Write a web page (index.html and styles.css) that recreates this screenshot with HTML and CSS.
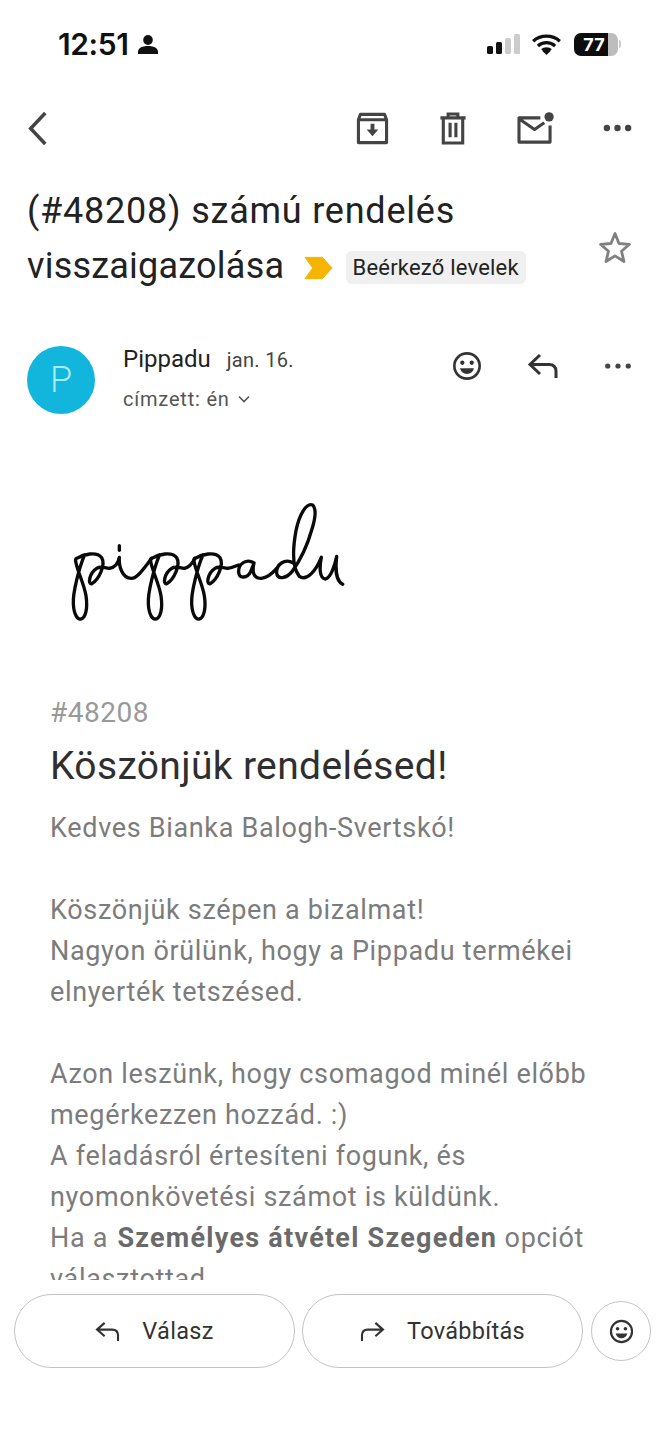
FILE: index.html
```html
<!DOCTYPE html>
<html lang="hu">
<head>
<meta charset="utf-8">
<title>Gmail</title>
<link rel="stylesheet" href="styles.css">
</head>
<body>
<div class="screen">
  <header class="status">
    <div class="status-left">
      <span class="time">12:51</span>
      <svg class="person" viewBox="0 0 20 19"><ellipse cx="10" cy="5" rx="4.800" ry="5"/><path d="M0 19v-2c0-4 4-6 10-6s10 2 10 6v2z"/></svg>
    </div>
    <div class="status-right">
      <svg class="signal" viewBox="0 0 33 20"><rect x="0" y="12" width="6" height="8" rx="1.500" fill="#111"/><rect x="9" y="8" width="6" height="12" rx="1.500" fill="#111"/><rect x="18" y="4" width="6" height="16" rx="1.500" fill="#ccc"/><rect x="27" y="0" width="6" height="20" rx="1.500" fill="#ccc"/></svg>
      <svg class="wifi" viewBox="0 0 30 22"><path d="M1 7.500C9 .5 21 .5 29 7.500M6 12.500c5-4.500 13-4.500 18 0M10.500 17c2.500-2 6.500-2 9 0" fill="none" stroke="#111" stroke-width="3.400"/><path d="M15 22l-4-4c2-2 6-2 8 0z" fill="#111"/></svg>
      <div class="battery"><span class="battery-fill">77</span><span class="battery-rest"></span></div>
      <span class="battery-tip"></span>
    </div>
  </header>

  <nav class="toolbar">
    <svg class="back" viewBox="0 0 20 36"><path d="M18 2L3 18l15 16" fill="none" stroke="#444" stroke-width="3.600"/></svg>
    <div class="tools">
      <svg class="ic" viewBox="0 0 34 34"><path d="M2.500 8l2-5.500h25l2 5.500v23.500h-29zM2.500 8h29" fill="none" stroke="#444" stroke-width="3.200" stroke-linejoin="round"/><path d="M15 12h4v6h4l-6 7-6-7h4z" fill="#444"/></svg>
      <svg class="ic ic-trash" viewBox="0 0 28 34"><path d="M1 6h26M9 5V2h10v3M4 6v26h20V6M11 11v15M17 11v15" fill="none" stroke="#444" stroke-width="3.200"/></svg>
      <svg class="ic ic-mail" viewBox="0 0 38 34"><path d="M24 6H2v25h32V14M2 7l16 11 10-7" fill="none" stroke="#444" stroke-width="3.200" stroke-linejoin="round"/><circle cx="33" cy="5" r="4.800" fill="#444"/></svg>
      <svg class="ic ic-more" viewBox="0 0 30 8"><circle cx="4" cy="4" r="3.300"/><circle cx="15" cy="4" r="3.300"/><circle cx="26" cy="4" r="3.300"/></svg>
    </div>
  </nav>

  <section class="subject">
    <h1 class="subject-text"><span class="subject-first">(#48208) számú rendelés</span><br>visszaigazolása
      <svg class="marker" viewBox="0 0 30 24"><path d="M1 1h18l10 11-10 11H1l8-11z" fill="#f4b400" stroke="#f4b400" stroke-linejoin="round"/></svg>
      <span class="label">Beérkező levelek</span>
    </h1>
    <svg class="star" viewBox="0 0 34 34"><path d="M17 3.500l4 10 10.500.8-8 6.900 2.500 10.300-9-5.600-9 5.600 2.500-10.300-8-6.900 10.500-.8z" fill="none" stroke="#808080" stroke-width="2.800" stroke-linejoin="round"/></svg>
  </section>

  <section class="sender">
    <div class="avatar">P</div>
    <div class="sender-info">
      <div class="sender-top"><span class="sender-name">Pippadu</span><span class="sender-date">jan. 16.</span></div>
      <div class="sender-to">címzett: én
        <svg class="chev" viewBox="0 0 12 8"><path d="M1 1.500l5 5 5-5" fill="none" stroke="#555" stroke-width="1.600"/></svg>
      </div>
    </div>
    <div class="sender-actions">
      <svg class="act act-smile" viewBox="0 0 32 32"><circle cx="16" cy="16" r="13.500" fill="none" stroke="#333" stroke-width="2.800"/><circle cx="11" cy="12.500" r="2.300" fill="#333"/><circle cx="21" cy="12.500" r="2.300" fill="#333"/><path d="M8.500 18.500h15c-1 4-4 6-7.500 6s-6.500-2-7.500-6z" fill="#333"/></svg>
      <svg class="act act-reply" viewBox="0 0 32 26"><path d="M13 2L3 11.500 13 21M3 11.500h19c5 0 7 3 7 7V25" fill="none" stroke="#333" stroke-width="3"/></svg>
      <svg class="act act-more" viewBox="0 0 30 8"><circle cx="4" cy="4" r="2.800"/><circle cx="15" cy="4" r="2.800"/><circle cx="26" cy="4" r="2.800"/></svg>
    </div>
  </section>

  <main class="mail">
    <svg class="logo" viewBox="0 0 930 420" role="img" aria-label="pippadu">
      <defs>
        <path id="letter-p" d="M104 197C88 235 68 310 70 345C72 380 84 392 92 390C106 388 114 360 108 320C102 285 84 250 78 222C76 212 76 210 80 208C100 196 140 186 155 206C168 228 146 272 126 284C112 288 118 252 140 238C152 230 165 238 178 238"/>
      </defs>
      <g class="logo-ink">
        <use href="#letter-p"/>
        <use href="#letter-p" x="225"/>
        <use href="#letter-p" x="355"/>
        <path d="M178 238C192 236 204 224 208 205C206 230 216 268 244 268C262 268 280 240 305 208"/>
        <path d="M403 238C416 236 426 226 435 208"/>
        <path d="M533 238C546 236 556 232 566 228"/>
        <path d="M612 222C590 208 564 224 566 250C568 270 592 268 602 248L612 222C606 248 610 270 634 268C652 266 668 252 680 238"/>
        <path d="M730 222C704 206 678 228 680 252C682 272 708 270 726 248C750 215 772 170 786 120C796 88 800 60 788 48C770 40 748 75 738 125C728 180 726 235 748 262C770 278 798 245 814 205C808 235 808 268 826 270C842 268 855 228 860 202C856 240 856 275 878 286"/>
        <path d="M208 170v14"/>
      </g>
    </svg>
    <p class="order-no">#48208</p>
    <h2 class="thanks">Köszönjük rendelésed!</h2>
    <p class="copy">Kedves Bianka Balogh-Svertskó!</p>
    <p class="copy copy-gap">Köszönjük szépen a bizalmat!<br>Nagyon örülünk, hogy a Pippadu termékei<br>elnyerték tetszésed.</p>
    <p class="copy copy-gap">Azon leszünk, hogy csomagod minél előbb<br>megérkezzen hozzád. :)<br>A feladásról értesíteni fogunk, és<br>nyomonkövetési számot is küldünk.<br>Ha a <b>Személyes átvétel Szegeden</b> opciót<br>választottad,</p>
  </main>

  <footer class="actions">
    <button class="pill">
      <svg class="pill-ic" viewBox="0 0 26 22"><path d="M10 2L2 9l8 7M2 9h16c4 0 6 2.500 6 6v6" fill="none" stroke="#333" stroke-width="2.200"/></svg>
      <span>Válasz</span>
    </button>
    <button class="pill">
      <svg class="pill-ic" viewBox="0 0 26 22"><path d="M16 2l8 7-8 7M24 9H8c-4 0-6 2.500-6 6v6" fill="none" stroke="#333" stroke-width="2.200"/></svg>
      <span>Továbbítás</span>
    </button>
    <button class="round">
      <svg class="round-ic" viewBox="0 0 32 32"><circle cx="16" cy="16" r="13.500" fill="none" stroke="#333" stroke-width="2.800"/><circle cx="11" cy="12.500" r="2.300" fill="#333"/><circle cx="21" cy="12.500" r="2.300" fill="#333"/><path d="M8.500 18.500h15c-1 4-4 6-7.500 6s-6.500-2-7.500-6z" fill="#333"/></svg>
    </button>
  </footer>
</div>
</body>
</html>
```

FILE: styles.css
```css
* { box-sizing: border-box; }
html, body { margin: 0; padding: 0; background: #fff; }
.screen {
  width: 665px;
  height: 1440px;
  display: flex;
  flex-direction: column;
  overflow: hidden;
  font-family: Roboto, "Liberation Sans", sans-serif;
  color: #222;
}
.status {
  height: 88px;
  flex: none;
  display: flex;
  justify-content: space-between;
  align-items: center;
  padding: 0 44px 0 58px;
}
.status-left { display: flex; align-items: center; gap: 9px; }
.time { font-family: Inter, sans-serif; font-weight: 600; font-size: 30px; color: #111; letter-spacing: -0.4px; }
.person { width: 20px; height: 19px; fill: #111; }
.status-right { display: flex; align-items: center; }
.signal { width: 33px; height: 20px; margin-right: 12px; }
.wifi { width: 29px; height: 21px; margin-right: 13px; }
.battery { width: 44px; height: 23px; border-radius: 7px; overflow: hidden; display: flex; }
.battery-fill {
  width: 34px; background: #0d0d0d; color: #fff;
  font-family: Inter, sans-serif; font-weight: 700; font-size: 18px;
  display: flex; align-items: center; justify-content: center; padding-left: 6px;
}
.battery-rest { flex: 1; background: #bdbdbd; }
.battery-tip { width: 2px; height: 8px; background: #ccc; border-radius: 0 2px 2px 0; margin-left: 1px; }

.toolbar {
  height: 80px;
  flex: none;
  display: flex;
  justify-content: space-between;
  align-items: center;
  padding: 0 33px 0 27px;
}
.back { width: 21px; height: 35px; }
.tools { display: flex; align-items: center; }
.ic { width: 33px; height: 33px; }
.ic-trash { width: 28px; margin-left: 50px; }
.ic-mail { width: 37px; margin-left: 50px; }
.ic-more { width: 29px; height: 8px; fill: #444; margin-left: 49px; }

.subject {
  flex: none;
  display: flex;
  justify-content: space-between;
  align-items: flex-start;
  padding: 16px 33px 0 27px;
  height: 140px;
}
.subject-text { margin: 0; font-weight: 400; font-size: 36px; line-height: 55px; color: #222; letter-spacing: 0.22px; }
.subject-first { letter-spacing: 0.78px; }
.marker { width: 29px; height: 24px; vertical-align: -2px; margin: 0 3px 0 11px; }
.label {
  display: inline-block;
  background: #f0f0f0;
  border-radius: 6px;
  font-size: 22px;
  line-height: 33px;
  padding: 0 7px;
  letter-spacing: 0.2px;
  vertical-align: 3px;
}
.star { width: 34px; height: 34px; margin-top: 46px; }

.sender {
  flex: none;
  display: flex;
  align-items: flex-start;
  padding: 38px 33px 0 27px;
  height: 181px;
}
.avatar {
  width: 68px; height: 68px; border-radius: 50%;
  background: #12b5dc; color: #a5ecf5;
  font-size: 36px; font-weight: 300;
  display: flex; align-items: center; justify-content: center;
  flex: none;
}
.sender-info { margin-left: 28px; flex: 1; margin-top: -2px; }
.sender-top { display: flex; align-items: baseline; gap: 16px; line-height: 30px; }
.sender-name { font-size: 24px; color: #222; }
.sender-date { font-size: 20px; color: #444; letter-spacing: 0.3px; }
.sender-to { font-size: 20px; color: #555; margin-top: 12px; line-height: 24px; display: flex; align-items: center; gap: 8px; letter-spacing: 0.8px; }
.chev { width: 12px; height: 8px; }
.sender-actions { display: flex; align-items: center; height: 40px; gap: 45px; }
.act-smile { width: 30px; height: 30px; }
.act-reply { width: 32px; height: 26px; }
.act-more { width: 28px; height: 8px; fill: #444; }

.mail { flex: 1; min-height: 0; overflow: hidden; padding: 0 50px; }
.logo { display: block; width: 310px; height: 140px; }
.logo-ink { fill: none; stroke: #0a0a0a; stroke-width: 10; stroke-linecap: round; stroke-linejoin: round; }
.order-no { margin: 64px 0 0; font-size: 28px; line-height: 40px; color: #999; letter-spacing: 0.5px; }
.thanks { margin: 8px 0 0; font-weight: 400; font-size: 39px; line-height: 50px; color: #2f2f2f; letter-spacing: 0.35px; }
.copy { margin: 17px 0 0; font-size: 27px; line-height: 41px; color: #7c7c7c; white-space: nowrap; letter-spacing: 0.67px; }
.copy-gap { margin-top: 41px; }
.copy b { font-weight: 700; color: #6a6a6a; letter-spacing: 1.25px; margin-left: 2px; }

.actions {
  flex: none;
  height: 160px;
  display: flex;
  align-items: flex-start;
  gap: 7px;
  padding: 14px 14px 0;
  background: #fff;
}
.pill {
  width: 281px; height: 74px;
  border: 1.500px solid #c4c4c4; border-radius: 37px;
  background: #fff;
  display: flex; align-items: center; justify-content: center; gap: 22px;
  font: 400 23.500px Roboto, sans-serif; letter-spacing: 0.3px; color: #333;
  padding: 0;
}
.pill-ic { width: 25px; height: 21px; }
.round {
  width: 60px; height: 60px; margin: 7px 0 0 1px;
  border: 1.500px solid #c4c4c4; border-radius: 50%;
  background: #fff;
  display: flex; align-items: center; justify-content: center;
  padding: 0;
}
.round-ic { width: 25px; height: 25px; }
```
